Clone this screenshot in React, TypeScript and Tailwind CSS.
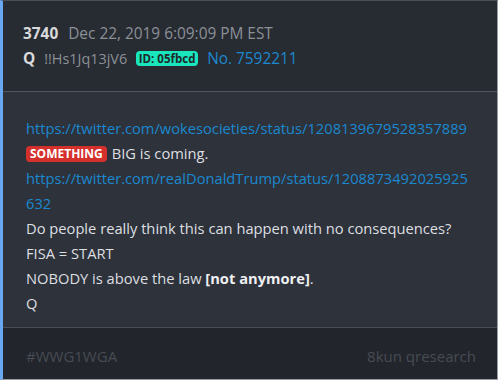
import React from 'react';

const font = { fontFamily: '"Open Sans", "Liberation Sans", sans-serif' };

const PostCard: React.FC = () => {
  return (
    <div
      className="w-[498px] h-[380px] flex flex-col border-t border-t-[#4a4e56] border-r border-r-[#9a9da3] border-b border-b-[#9a9da3] border-l-[3px] border-l-[#68a8f2]"
      style={font}
    >
      {/* Header */}
      <div className="h-[90px] bg-[#272b32] px-[20px] pt-[20px] leading-[25px] text-[15.4px]">
        <div className="flex items-center gap-[10px]">
          <span className="font-bold text-[#d9dadc]">3740</span>
          <span className="text-[#8c9097]">Dec 22, 2019 6:09:09 PM EST</span>
        </div>
        <div className="flex items-center">
          <span className="font-bold text-[#d9dadc]">Q</span>
          <span className="ml-[9px] text-[#8c9097] text-[14.4px]">!!Hs1Jq13jV6</span>
          <span className="ml-[9px] h-[15px] w-[62px] flex items-center justify-center whitespace-nowrap rounded-[4px] bg-[#19e6bd] text-[11.5px] leading-none font-bold text-[#1e2a2a]">
            ID: 05fbcd
          </span>
          <span className="ml-[9px] text-[#1b88cf]">No. 7592211</span>
        </div>
      </div>

      <div className="h-px bg-[#50555d]" />

      {/* Body */}
      <div className="h-[235px] bg-[#2d323b] pl-[23px] pr-[24px] pt-[24px] leading-[25px] text-[14.7px] text-[#dedfe1]">
        <div className="text-[#1b88cf] break-all">https://twitter.com/wokesocieties/status/1208139679528357889</div>
        <div className="flex items-center">
          <span className="h-[16px] px-[4px] flex items-center justify-center whitespace-nowrap rounded-[4px] bg-[#d4302c] text-[12px] leading-none font-bold text-white">
            SOMETHING
          </span>
          <span className="ml-[5px]">BIG is coming.</span>
        </div>
        <div className="text-[#1b88cf] break-all">https://twitter.com/realDonaldTrump/status/1208873492025925632</div>
        <div>Do people really think this can happen with no consequences?</div>
        <div>FISA = START</div>
        <div>
          NOBODY is above the law <span className="font-bold text-[#f0f0f2]">[not anymore]</span>.
        </div>
        <div>Q</div>
      </div>

      <div className="h-px bg-[#4a4f57]" />

      {/* Footer */}
      <div className="flex-1 bg-[#22252b] pl-[23px] pr-[21px] pt-[16px] leading-[25px] text-[15px] flex justify-between text-[#474c54]">
        <span>#WWG1WGA</span>
        <span>8kun qresearch</span>
      </div>
    </div>
  );
};

export default function App() {
  return (
    <div className="w-[500px] h-[382px] bg-white">
      <PostCard />
    </div>
  );
}
